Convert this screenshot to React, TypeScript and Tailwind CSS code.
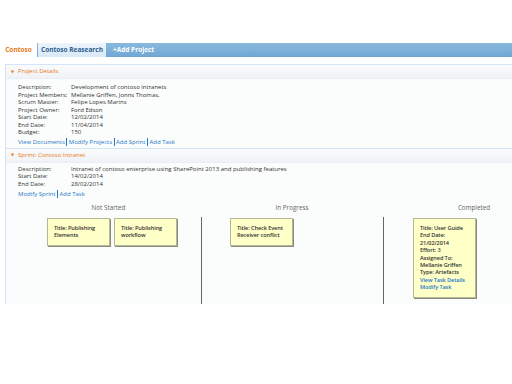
const font = { fontFamily: '"Open Sans", "DejaVu Sans", sans-serif' };

const projectRows: [string, string][] = [
  ["Description:", "Development of contoso intranets"],
  ["Project Members:", "Mellanie Griffen, Jonns Thomas,"],
  ["Scrum Master:", "Felipe Lopes Marins"],
  ["Project Owner:", "Ford Edson"],
  ["Start Date:", "12/02/2014"],
  ["End Date:", "11/04/2014"],
  ["Budget:", "150"],
];

const sprintRows: [string, string][] = [
  ["Description:", "Intranet of contoso enterprise using SharePoint 2013 and publishing features"],
  ["Start Date:", "14/02/2014"],
  ["End Date:", "28/02/2014"],
];

function Links({ items }: { items: string[] }) {
  return (
    <div className="flex items-center text-[6px] leading-[8px] text-[#1f78c8]">
      {items.map((l, i) => (
        <span key={l} className="flex items-center">
          {i > 0 && <span className="mx-[1.5px] inline-block h-[8px] w-px bg-[#1f78c8]" />}
          <span>{l}</span>
        </span>
      ))}
    </div>
  );
}

function Rows({ rows }: { rows: [string, string][] }) {
  return (
    <div className="text-[6px] leading-[7.5px] text-[#333]">
      {rows.map(([k, v]) => (
        <div key={k} className="flex">
          <span className="w-[53px] shrink-0">{k}</span>
          <span className="whitespace-nowrap">{v}</span>
        </div>
      ))}
    </div>
  );
}

function SectionHeader({ title }: { title: string }) {
  return (
    <div className="flex h-[14px] items-center border-t border-[#d3e5f7] bg-gradient-to-b from-[#fafbfc] to-[#f0f2f5] pl-[5px] text-[6px] text-[#e8791a]">
      <span className="mr-[4px] text-[4px]">▼</span>
      <span>{title}</span>
    </div>
  );
}

function Card({ lines, links = [] }: { lines: string[]; links?: string[] }) {
  return (
    <div className="w-[63px] whitespace-nowrap border border-[#b5b59a] bg-[#ffffc8] px-[6px] pt-[6px] pb-[5px] text-[5.6px] font-semibold leading-[7.4px] tracking-[-0.1px] text-[#333] shadow-[1px_1px_0_#8c8c7a]">
      {lines.map((l) => (
        <div key={l}>{l}</div>
      ))}
      {links.map((l) => (
        <div key={l} className="text-[#1f78c8]">{l}</div>
      ))}
    </div>
  );
}

export default function App() {
  return (
    <div className="h-[384px] w-[512px] overflow-hidden bg-white" style={font}>
      <div className="h-[43px]" />
      <div className="flex h-[14px] w-[600px] items-stretch bg-gradient-to-b from-[#88b8dd] via-[#7fb1da] to-[#6ea6d4] text-[6.5px] font-bold">
        <div className="flex w-[37px] items-center justify-center bg-white text-[#e8791a]">Contoso</div>
        <div className="ml-px flex w-[68px] items-center justify-center bg-gradient-to-b from-[#eef5fb] to-[#d8e8f5] text-[#2a5e92]">
          Contoso Reasearch
        </div>
        <div className="flex items-center pl-[7px] text-white">+Add Project</div>
      </div>
      <div className="h-[7px]" />
      <div className="ml-[5px] w-[570px] border-l border-[#d3e5f7] bg-[#fbfcfc]">
        <SectionHeader title="Project Details" />
        <div className="border-t border-[#e6eef7] pl-[12px] pt-[5px] pb-[2px]">
          <Rows rows={projectRows} />
          <div className="mt-[1px]">
            <Links items={["View Documents", "Modify Projects", "Add Sprint", "Add Task"]} />
          </div>
        </div>
        <SectionHeader title="Sprint: Contoso Intranet" />
        <div className="border-t border-[#e6eef7] pl-[12px] pt-[3px]">
          <Rows rows={sprintRows} />
          <div className="mt-[2px]">
            <Links items={["Modify Sprint", "Add Task"]} />
          </div>
        </div>
        <div className="mt-[5px] grid grid-cols-[195px_182px_182px] text-[6.3px] text-[#666]">
          <div className="pl-[10px] text-center leading-[9px]">Not Started</div>
          <div className="text-center leading-[9px]">In Progress</div>
          <div className="text-center leading-[9px]">Completed</div>
        </div>
        <div className="mt-[5px] grid h-[87px] grid-cols-[195px_182px_182px]">
          <div className="flex items-start gap-[4px] pl-[41px] pt-px">
            <Card lines={["Title: Publishing", "Elements"]} />
            <Card lines={["Title: Publishing", "workflow"]} />
          </div>
          <div className="flex items-start border-l border-[#666] pl-[28px] pt-px">
            <Card lines={["Title: Check Event", "Receiver conflict"]} />
          </div>
          <div className="flex items-start border-l border-[#666] pl-[29px] pt-px">
            <Card
              lines={[
                "Title: User Guide",
                "End Date:",
                "21/02/2014",
                "Effort: 3",
                "Assigned To:",
                "Mellanie Griffen",
                "Type: Artefacts",
              ]}
              links={["View Task Details", "Modify Task"]}
            />
          </div>
        </div>
      </div>
    </div>
  );
}
